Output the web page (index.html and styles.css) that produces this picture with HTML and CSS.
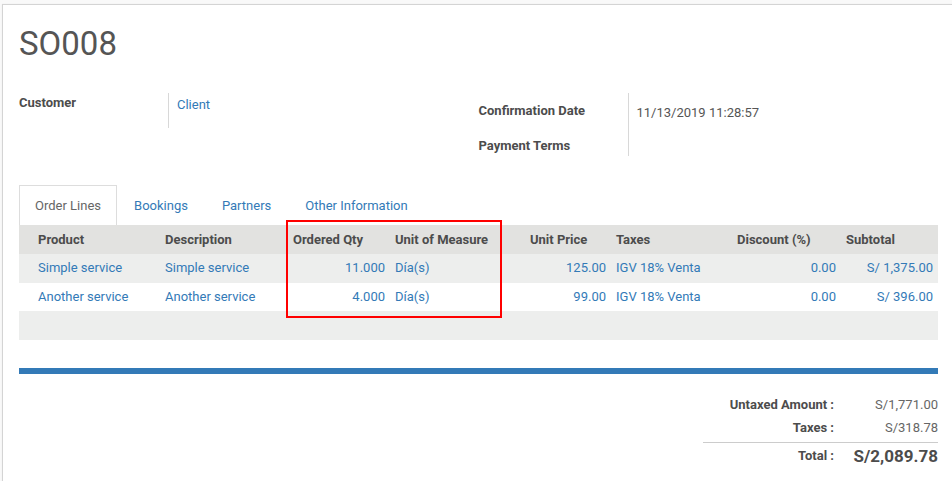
FILE: index.html
```html
<!DOCTYPE html>
<html>
<head>
<meta charset="utf-8">
<link rel="stylesheet" href="styles.css">
</head>
<body>
<div class="sheet">
  <h1 class="title">SO008</h1>

  <div class="groups">
    <div class="group group-left">
      <div class="lbl">Customer</div>
      <div class="val"><a class="link">Client</a></div>
    </div>
    <div class="group group-right">
      <div class="lbl lbl-r1">Confirmation Date</div>
      <div class="val val-r1">11/13/2019 11:28:57</div>
      <div class="lbl lbl-r2">Payment Terms</div>
      <div class="val val-r2"></div>
    </div>
  </div>

  <ul class="tabs">
    <li class="tab active">Order Lines</li>
    <li class="tab">Bookings</li>
    <li class="tab">Partners</li>
    <li class="tab">Other Information</li>
  </ul>

  <div class="list">
    <table class="lines">
      <colgroup>
        <col class="c1"><col class="c2"><col class="c3"><col class="c4">
        <col class="c5"><col class="c6"><col class="c7"><col class="c8">
      </colgroup>
      <thead>
        <tr>
          <th>Product</th><th>Description</th><th>Ordered Qty</th><th>Unit of Measure</th>
          <th>Unit Price</th><th>Taxes</th><th>Discount (%)</th><th>Subtotal</th>
        </tr>
      </thead>
      <tbody>
        <tr class="odd">
          <td>Simple service</td><td>Simple service</td><td class="num">11.000</td><td>Día(s)</td>
          <td class="num">125.00</td><td>IGV 18% Venta</td><td class="num">0.00</td><td class="num">S/ 1,375.00</td>
        </tr>
        <tr>
          <td>Another service</td><td>Another service</td><td class="num">4.000</td><td>Día(s)</td>
          <td class="num">99.00</td><td>IGV 18% Venta</td><td class="num">0.00</td><td class="num">S/ 396.00</td>
        </tr>
        <tr class="odd empty">
          <td colspan="8"></td>
        </tr>
      </tbody>
    </table>
    <div class="highlight"></div>
  </div>

  <div class="bar"></div>

  <div class="totals-wrap">
    <div class="totals">
      <div class="t-lbl">Untaxed Amount :</div>
      <div class="t-val">S/1,771.00</div>
      <div class="t-lbl t-mid">Taxes :</div>
      <div class="t-val t-mid">S/318.78</div>
      <div class="t-lbl t-total">Total :</div>
      <div class="t-val t-total t-big">S/2,089.78</div>
    </div>
  </div>
</div>
</body>
</html>
```

FILE: styles.css
```css
html, body {
  margin: 0;
  padding: 0;
}
body {
  background: #f9f9f9;
  font-family: Roboto, "Liberation Sans", sans-serif;
  font-size: 13px;
  line-height: 20px;
  color: #4c4c4c;
  overflow: hidden;
  height: 481px;
}
.sheet {
  margin: 4px 0 0 2px;
  width: 1000px;
  min-height: 600px;
  background: #fff;
  border: 1px solid #d4d4d4;
  box-shadow: 0 0 1px rgba(0,0,0,0.08);
  padding: 19px 0 0 16px;
  box-sizing: border-box;
}
.title {
  margin: 0;
  font-size: 33px;
  line-height: 40px;
  font-weight: 400;
  color: #555;
}
.groups {
  display: flex;
  width: 919px;
  margin-top: 29px;
}
.group {
  display: grid;
  grid-template-columns: 149px 1fr;
  width: 460px;
  align-content: start;
}
.lbl {
  font-weight: 700;
  color: #4c4c4c;
}
.val {
  border-left: 1px solid #d8d8d8;
  padding-left: 8px;
  color: #555;
}
.group-left .lbl { padding: 0 0 15px; }
.group-left .val { padding-top: 2px; padding-bottom: 13px; }
.link { color: #337ab7; }
.lbl-r1 { padding: 8px 0 7px; }
.val-r1 { padding-top: 10px; padding-bottom: 5px; }
.lbl-r2 { padding: 8px 0 0; }
.val-r2 { padding-top: 8px; }

.tabs {
  list-style: none;
  margin: 29px 0 0;
  padding: 0;
  display: flex;
}
.tab {
  padding: 10px 16px 9px;
  border: 1px solid transparent;
  border-bottom: none;
  color: #337ab7;
}
.tab.active {
  border-color: #ddd;
  color: #666;
  background: #fff;
  padding-right: 15px;
  padding-left: 15px;
}

.list {
  position: relative;
  width: 919px;
}
.lines {
  width: 919px;
  table-layout: fixed;
  border-collapse: collapse;
}
.c1 { width: 141px; }
.c2 { width: 128px; }
.c3 { width: 102px; }
.c4 { width: 135px; }
.c5 { width: 86px; }
.c6 { width: 121px; }
.c7 { width: 109px; }
.c8 { width: 97px; }
.lines th {
  background: #e2e2e0;
  text-align: left;
  font-weight: 700;
  color: #4c4c4c;
  padding: 5px 5px 4px;
  white-space: nowrap;
}
.lines td {
  padding: 4px 5px 4.5px;
  color: #337ab7;
  white-space: nowrap;
}
.lines th:first-child,
.lines td:first-child {
  padding-left: 19px;
}
.lines td.num { text-align: right; }
.lines tr.odd td { background: #edeeed; }
.lines tr.empty td { height: 20px; padding-top: 5px; padding-bottom: 4px; }

.highlight {
  position: absolute;
  left: 267px;
  top: -5px;
  width: 216px;
  height: 98px;
  border: 2px solid #f00;
  box-sizing: border-box;
}

.bar {
  width: 919px;
  height: 6px;
  background: #337ab7;
  margin-top: 28px;
}

.totals-wrap {
  width: 919px;
  display: flex;
  justify-content: flex-end;
  margin-top: 21px;
}
.totals {
  width: 235px;
  display: grid;
  grid-template-columns: 131px 104px;
  align-items: baseline;
}
.t-lbl {
  text-align: right;
  font-weight: 700;
  color: #4c4c4c;
  padding-bottom: 3px;
}
.t-val {
  text-align: right;
  color: #666;
  padding-bottom: 3px;
}
.t-mid { padding-bottom: 4px; }
.t-total {
  border-top: 1px solid #ccc;
  padding: 1px 0 0;
  line-height: 24px;
  align-self: stretch;
}
.t-big {
  font-size: 17px;
  font-weight: 700;
  color: #4c4c4c;
}
```
